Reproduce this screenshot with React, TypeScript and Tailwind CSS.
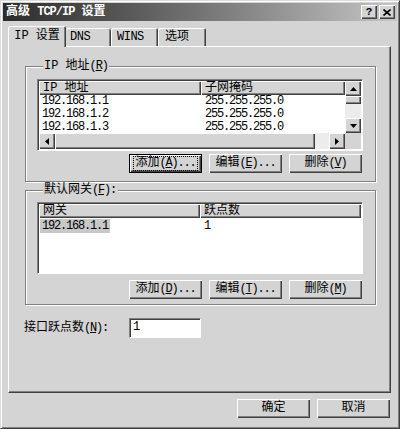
const raised = 'bg-[#d4d4d4] shadow-[inset_1px_1px_0_#fff,inset_-1px_-1px_0_#404040,inset_-2px_-2px_0_#808080]';
const sunken = 'border border-t-[#808080] border-l-[#808080] border-r-white border-b-white shadow-[inset_1px_1px_0_#404040]';

function Btn({ children, focus = false }: { children: React.ReactNode; focus?: boolean }) {
  return (
    <div className={`w-[73px] h-[19px] flex items-center justify-center whitespace-nowrap leading-[13px] ${raised} ${focus ? 'border border-black' : ''}`}>
      {focus ? <span className="border border-dotted border-black px-[1px]">{children}</span> : children}
    </div>
  );
}

function Arrow({ dir }: { dir: 'up' | 'down' | 'left' | 'right' }) {
  const pts = { up: '0,4 7,4 3.5,0', down: '0,0 7,0 3.5,4', left: '4,0 4,7 0,3.5', right: '0,0 0,7 4,3.5' }[dir];
  const vert = dir === 'up' || dir === 'down';
  return (
    <svg width={vert ? 7 : 4} height={vert ? 4 : 7} viewBox={vert ? '0 0 7 4' : '0 0 4 7'}>
      <polygon points={pts} fill="#000" />
    </svg>
  );
}

function Key({ k, dots = false }: { k: string; dots?: boolean }) {
  return <span className="tracking-[-1.2px]">(<span className="underline">{k}</span>){dots ? '...' : ''}</span>;
}

function Group({ label, children }: { label: React.ReactNode; children: React.ReactNode }) {
  return (
    <fieldset className="ml-[16px] w-[351px] border border-[#808080] shadow-[1px_1px_0_#fff,inset_1px_1px_0_#fff] pl-[11px]">
      <legend className="ml-[6px] px-[1px] leading-[14px] bg-[#d4d4d4]">{label}</legend>
      {children}
    </fieldset>
  );
}

export default function App() {
  const ips = ['192.168.1.1', '192.168.1.2', '192.168.1.3'];
  return (
    <div className="w-[400px] h-[429px] bg-[#d4d4d4] border border-t-[#dcdcdc] border-l-[#dcdcdc] border-r-[#404040] border-b-[#404040] shadow-[inset_1px_1px_0_#fff,inset_-1px_-1px_0_#808080] p-[2px] flex flex-col font-['Liberation_Mono','Noto_Sans_CJK_SC',monospace] text-[12px] text-black">
      {/* title bar */}
      <div className="h-[18px] flex items-center bg-linear-to-r from-[#2c2c2c] to-[#c6c6c6] pl-[3px] pr-[2px]">
        <span className="text-white font-bold leading-[14px]">高级 <span className="tracking-[-1px]">TCP/IP</span> 设置</span>
        <div className="ml-auto flex gap-[2px]">
          <div className={`w-[16px] h-[14px] flex items-center justify-center font-bold text-[11px] leading-[11px] ${raised}`}>?</div>
          <div className={`w-[16px] h-[14px] flex items-center justify-center ${raised}`}>
            <svg width="8" height="7" viewBox="0 0 8 7"><path d="M0.5 0.5 L7.5 6.5 M7.5 0.5 L0.5 6.5" stroke="#000" strokeWidth="1.6" /></svg>
          </div>
        </div>
      </div>

      {/* tabs */}
      <div className="mt-[5px] ml-[5px] h-[20px] flex items-end">
        <div className="relative z-10 mb-[-1px] w-[58px] h-[21px] bg-[#d4d4d4] rounded-t-[2px] shadow-[inset_1px_1px_0_#fff,inset_-1px_0_0_#404040,inset_-2px_0_0_#808080] flex justify-center pt-[3px] leading-[14px]">IP 设置</div>
        <div className="w-[45px] h-[18px] rounded-t-[2px] shadow-[inset_0_1px_0_#fff,inset_-1px_0_0_#404040,inset_-2px_0_0_#808080] pl-[4px] pt-[2px] leading-[14px] tracking-[-0.5px]">DNS</div>
        <div className="w-[47px] h-[18px] rounded-t-[2px] shadow-[inset_1px_1px_0_#fff,inset_-1px_0_0_#404040,inset_-2px_0_0_#808080] pl-[6px] pt-[2px] leading-[14px] tracking-[-0.5px]">WINS</div>
        <div className="w-[48px] h-[18px] rounded-t-[2px] shadow-[inset_1px_1px_0_#fff,inset_-1px_0_0_#404040,inset_-2px_0_0_#808080] pl-[7px] pt-[2px] leading-[14px]">选项</div>
      </div>

      {/* tab panel */}
      <div className="ml-[5px] w-[383px] h-[347px] border border-t-white border-l-white border-r-[#404040] border-b-[#404040] shadow-[inset_-1px_-1px_0_#808080] flex flex-col">
        <div className="mt-[12px]">
          <Group label={<>IP 地址<Key k="R" /></>}>
            <div className={`mt-[6px] w-[326px] h-[72px] bg-white ${sunken} p-[1px]`}>
              <div className="grid grid-cols-[306px_16px] grid-rows-[52px_16px]">
                <div className="overflow-hidden">
                  <div className="flex h-[14px] leading-[14px]">
                    <div className={`w-[162px] pl-[4px] ${raised}`}>IP 地址</div>
                    <div className={`flex-1 pl-[4px] ${raised}`}>子网掩码</div>
                  </div>
                  {ips.map(ip => (
                    <div key={ip} className="flex h-[13px] leading-[13px]">
                      <div className="w-[162px] pl-[3px] tracking-[-1.2px]">{ip}</div>
                      <div className="pl-[4px] tracking-[-1.2px]">255.255.255.0</div>
                    </div>
                  ))}
                </div>
                <div className="flex flex-col bg-[#ececec]">
                  <div className={`h-[15px] flex items-center justify-center ${raised}`}><Arrow dir="up" /></div>
                  <div className={`h-[8px] ${raised}`} />
                  <div className="flex-1" />
                  <div className={`h-[15px] flex items-center justify-center ${raised}`}><Arrow dir="down" /></div>
                </div>
                <div className="flex bg-[#ececec]">
                  <div className={`w-[16px] flex items-center justify-center ${raised}`}><Arrow dir="left" /></div>
                  <div className={`w-[260px] ${raised}`} />
                  <div className="flex-1" />
                  <div className={`w-[16px] flex items-center justify-center ${raised}`}><Arrow dir="right" /></div>
                </div>
                <div className="bg-[#d4d4d4]" />
              </div>
            </div>
            <div className="mt-[3px] pl-[92px] flex gap-[7px]">
              <Btn focus>添加<Key k="A" dots /></Btn>
              <Btn>编辑<Key k="E" dots /></Btn>
              <Btn>删除<Key k="V" /></Btn>
            </div>
            <div className="h-[8px]" />
          </Group>
        </div>

        <div className="mt-[1px]">
          <Group label={<>默认网关<Key k="F" />:</>}>
            <div className={`mt-[5px] w-[326px] h-[72px] bg-white ${sunken} p-[1px]`}>
              <div className="flex h-[14px] leading-[14px]">
                <div className={`w-[161px] pl-[4px] ${raised}`}>网关</div>
                <div className={`flex-1 pl-[4px] ${raised}`}>跃点数</div>
              </div>
              <div className="flex h-[14px] leading-[14px] mt-[1px]">
                <div className="w-[161px] pl-[1px]"><span className="bg-[#c8c8c8] px-[2px] tracking-[-1.2px]">192.168.1.1</span></div>
                <div className="pl-[4px]">1</div>
              </div>
            </div>
            <div className="mt-[6px] pl-[92px] flex gap-[7px]">
              <Btn>添加<Key k="D" dots /></Btn>
              <Btn>编辑<Key k="T" dots /></Btn>
              <Btn>删除<Key k="M" /></Btn>
            </div>
            <div className="h-[5px]" />
          </Group>
        </div>

        <div className="mt-[13px] ml-[15px] flex items-center">
          <div className="w-[105px] leading-[14px]">接口跃点数<Key k="N" />:</div>
          <div className={`w-[72px] h-[20px] bg-white ${sunken} pl-[3px] leading-[16px]`}>1</div>
        </div>
      </div>

      {/* dialog buttons */}
      <div className="mt-[6px] pr-[7px] flex justify-end gap-[7px]">
        <Btn>确定</Btn>
        <Btn>取消</Btn>
      </div>
    </div>
  );
}
